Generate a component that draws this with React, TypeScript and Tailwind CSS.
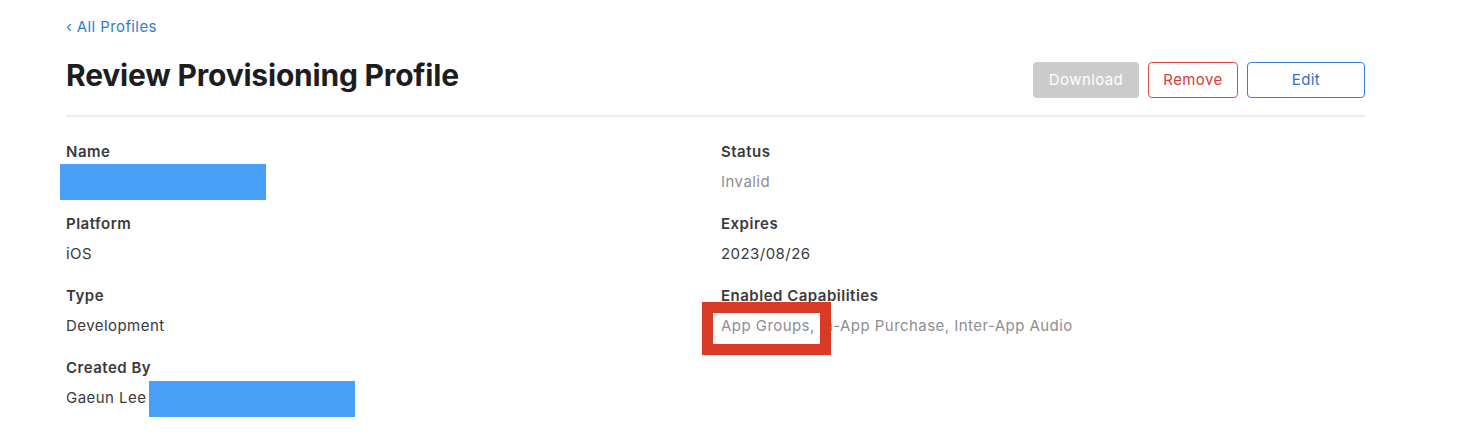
import React from "react";

const font = { fontFamily: "Inter, 'Noto Sans', 'Liberation Sans', sans-serif" };

function Field({ label, value, gray }: { label: string; value: React.ReactNode; gray?: boolean }) {
  return (
    <div className="flex flex-col h-[72px]">
      <div className="h-[20px] leading-[20px] text-[15px] font-semibold tracking-[0.5px] text-[#3a3a3c]">{label}</div>
      <div className={`relative mt-[10px] h-[20px] leading-[20px] text-[15px] tracking-[0.45px] ${gray ? "text-[#8e8e93]" : "text-[#3a3a3c]"}`}>{value}</div>
    </div>
  );
}

export default function App() {
  return (
    <div className="w-[1464px] h-[446px] bg-white relative overflow-hidden" style={font}>
      <div className="ml-[66px] w-[1299px] pt-[16px]">
        <a className="block h-[20px] leading-[20px] text-[15px] tracking-[0.4px] text-[#2f7bd6] mt-[1px]">‹ All Profiles</a>
        <div className="mt-[20px] flex items-start justify-between h-[41px]">
          <h1 className="text-[30px] font-bold text-[#1d1d1f] tracking-[-0.2px] leading-[36px]">Review Provisioning Profile</h1>
          <div className="flex gap-[9px] mt-[5px]">
            <button className="w-[106px] h-[36px] rounded-[4px] bg-[#cbcbcb] text-white text-[15px] tracking-[0.4px]">Download</button>
            <button className="w-[90px] h-[36px] rounded-[4px] border border-[#e24a4a] text-[#d93a3a] text-[15px] tracking-[0.4px]">Remove</button>
            <button className="w-[118px] h-[36px] rounded-[4px] border border-[#3b7fd8] text-[#2f6fcf] text-[15px] tracking-[0.4px]">Edit</button>
          </div>
        </div>
        <div className="mt-[17px] h-[2px] bg-[#ececec]" />
        <div className="mt-[25px] grid grid-cols-[655px_1fr]">
          <div className="flex flex-col">
            <Field label="Name" value={<span className="absolute left-[-6px] top-[-8px] w-[206px] h-[36px] bg-[#479ff8]" />} />
            <Field label="Platform" value="iOS" />
            <Field label="Type" value="Development" />
            <Field
              label="Created By"
              value={
                <span className="relative inline-flex">
                  Gaeun Lee
                  <span className="absolute left-[83px] top-[-7px] w-[206px] h-[36px] bg-[#479ff8]" />
                </span>
              }
            />
          </div>
          <div className="flex flex-col">
            <Field label="Status" value="Invalid" gray />
            <Field label="Expires" value="2023/08/26" />
            <Field
              label="Enabled Capabilities"
              gray
              value={
                <span className="relative inline-block">
                  App Groups, In-App Purchase, Inter-App Audio
                  <span className="absolute left-[-19px] top-[-14px] w-[129px] h-[53px] border-[11px] border-[#d93a25]" />
                </span>
              }
            />
          </div>
        </div>
      </div>
    </div>
  );
}
